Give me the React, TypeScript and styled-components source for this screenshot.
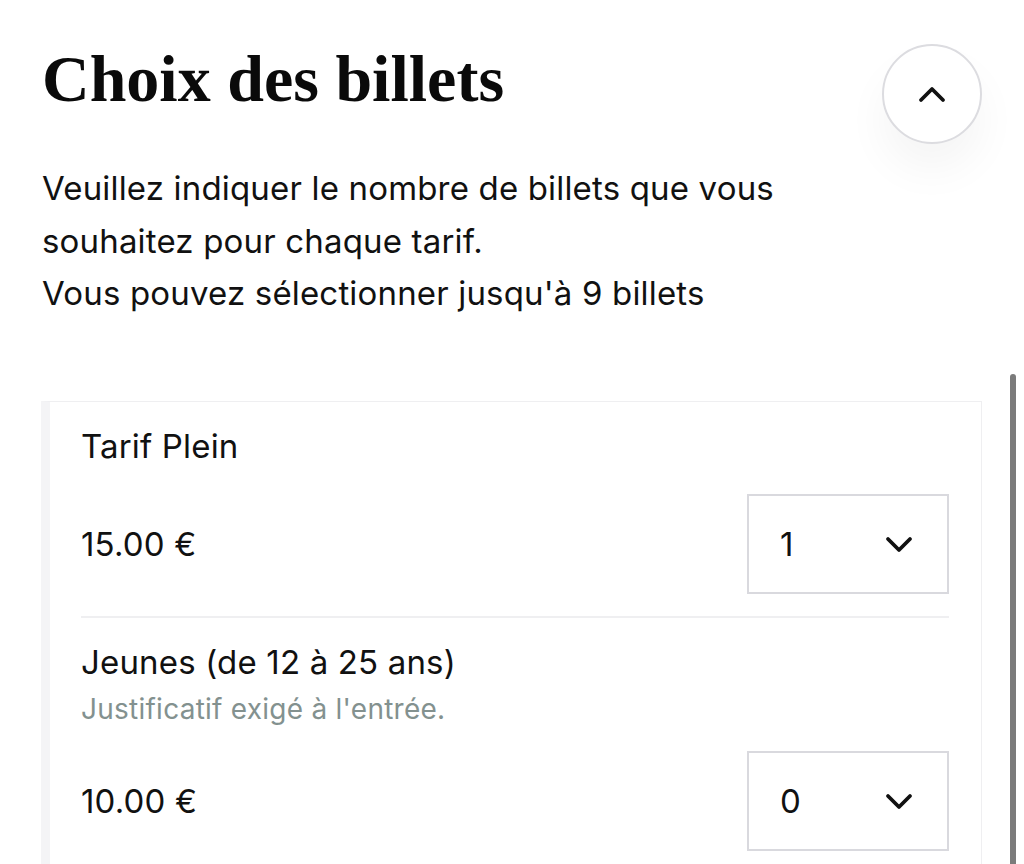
import styled, { createGlobalStyle } from "styled-components";

const GlobalStyle = createGlobalStyle`
  html, body {
    margin: 0;
    padding: 0;
    background: #ffffff;
    overflow: hidden;
  }
  body {
    font-family: Inter, "Noto Sans", sans-serif;
    color: #111111;
    letter-spacing: 0.17px;
  }
`;

const Page = styled.div`
  position: relative;
  height: 864px;
  padding: 0 42px 0 41px;
  box-sizing: border-box;
  overflow: hidden;
`;

const Header = styled.header`
  display: flex;
  justify-content: space-between;
  align-items: flex-start;
  padding-top: 44px;
`;

const Title = styled.h1`
  margin: -1px 0 0 1px;
  font-family: "Liberation Serif", "Times New Roman", serif;
  font-weight: 700;
  font-size: 66px;
  line-height: 72px;
  letter-spacing: 0;
  color: #0a0a0a;
`;

const RoundButton = styled.button`
  width: 100px;
  height: 100px;
  border-radius: 50%;
  border: 2px solid #dcdce0;
  background: #ffffff;
  display: flex;
  align-items: center;
  justify-content: center;
  box-shadow: 0 26px 44px rgba(0, 0, 0, 0.045);
  cursor: pointer;
  padding: 0;
`;

const Intro = styled.p`
  margin: 18px 0 0 1px;
  font-size: 33px;
  line-height: 52.5px;
  color: #111111;
`;

const Card = styled.section`
  margin-top: 81px;
  border: 1px solid #efeff1;
  border-left: 9px solid #f4f4f6;
  padding: 0 32px 0 31px;
  background: #ffffff;
`;

const Tariff = styled.div<{ $last?: boolean }>`
  padding: 24px 0 22px;
  border-bottom: ${(p) => (p.$last ? "none" : "2px solid #efeff1")};
`;

const TariffName = styled.div`
  font-size: 33px;
  line-height: 40px;
  color: #111111;
`;

const Note = styled.div`
  font-size: 28px;
  line-height: 34px;
  letter-spacing: 0.25px;
  color: #83918f;
  margin-top: 10px;
`;

const PriceRow = styled.div<{ $gap: number }>`
  display: flex;
  justify-content: space-between;
  align-items: center;
  margin-top: ${(p) => p.$gap}px;
`;

const Price = styled.span`
  font-size: 33px;
  color: #111111;
`;

const Select = styled.div`
  width: 202px;
  height: 100px;
  box-sizing: border-box;
  border: 2px solid #d9d9de;
  display: flex;
  align-items: center;
  justify-content: space-between;
  padding: 0 34px 0 31px;
  font-size: 33px;
  color: #111111;
`;

const Scrollbar = styled.div`
  position: absolute;
  right: 8px;
  top: 374px;
  width: 6px;
  height: 520px;
  border-radius: 3px;
  background: #7b7b7b;
`;

const Chevron = ({ up }: { up?: boolean }) => (
  <svg width="28" height="18" viewBox="0 0 28 18" fill="none">
    <path
      d={up ? "M3 15 L14 4 L25 15" : "M3 4 L14 15 L25 4"}
      stroke="#111"
      strokeWidth="3.8"
      strokeLinecap="round"
      strokeLinejoin="round"
    />
  </svg>
);

const tariffs = [
  { name: "Tarif Plein", price: "15.00 €", qty: 1 },
  {
    name: "Jeunes (de 12 à 25 ans)",
    note: "Justificatif exigé à l'entrée.",
    price: "10.00 €",
    qty: 0,
  },
];

export default function App() {
  return (
    <>
      <GlobalStyle />
      <Page>
        <Header>
          <Title>Choix des billets</Title>
          <RoundButton aria-label="Réduire">
            <Chevron up />
          </RoundButton>
        </Header>
        <Intro>
          Veuillez indiquer le nombre de billets que vous
          <br />
          souhaitez pour chaque tarif.
          <br />
          Vous pouvez sélectionner jusqu'à 9 billets
        </Intro>
        <Card>
          {tariffs.map((t, i) => (
            <Tariff key={t.name} $last={i === tariffs.length - 1}>
              <TariffName>{t.name}</TariffName>
              {t.note && <Note>{t.note}</Note>}
              <PriceRow $gap={t.note ? 25 : 28}>
                <Price>{t.price}</Price>
                <Select>
                  <span>{t.qty}</span>
                  <Chevron />
                </Select>
              </PriceRow>
            </Tariff>
          ))}
        </Card>
        <Scrollbar />
      </Page>
    </>
  );
}
